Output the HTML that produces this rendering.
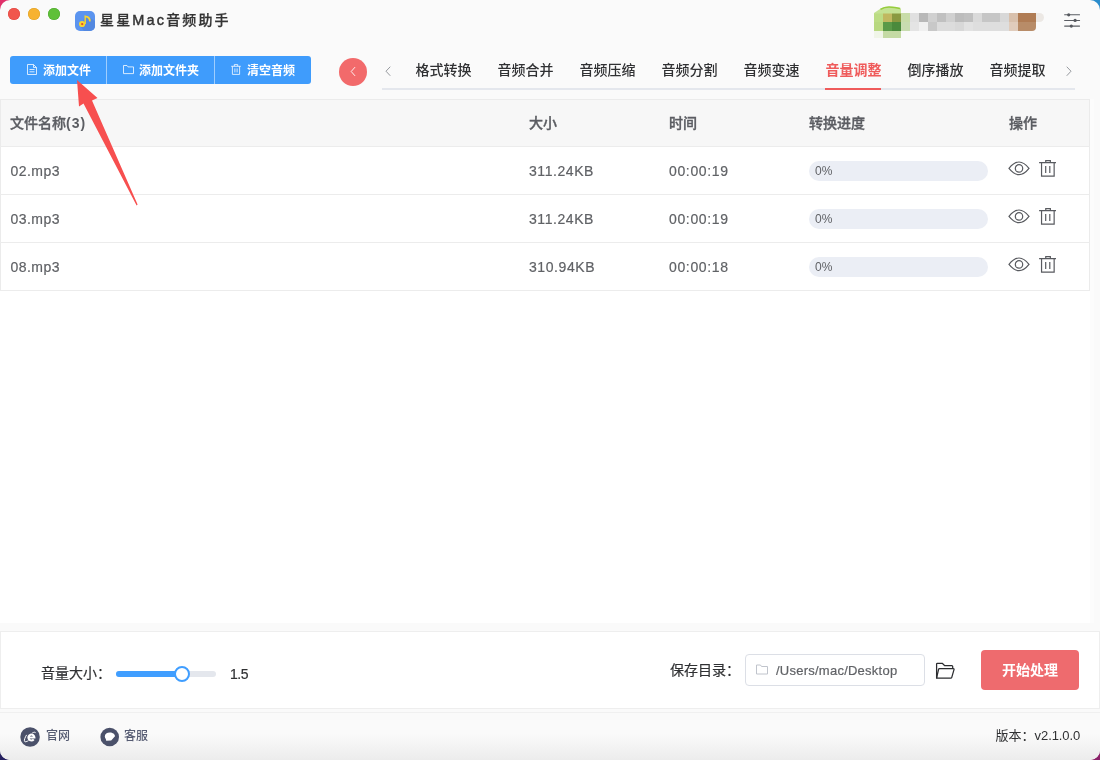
<!DOCTYPE html>
<html lang="zh-CN">
<head>
<meta charset="utf-8">
<title>星星Mac音频助手</title>
<style>
*{box-sizing:border-box;margin:0;padding:0}
html,body{width:1100px;height:760px;overflow:hidden}
body{position:relative;background:#fafafa;font-family:"Liberation Sans","Noto Sans CJK SC",sans-serif;color:#606266;font-size:14px}
.abs{position:absolute}
.corner{position:absolute;width:14px;height:14px}
#win{will-change:transform;position:absolute;left:0;top:0;width:1100px;height:760px;border-radius:10px;background:#fafafa;overflow:hidden}
.tl{position:absolute;width:12px;height:12px;border-radius:50%;top:8px}
#title{position:absolute;left:100px;top:8px;height:24px;line-height:24px;font-size:14px;letter-spacing:2.15px;color:#333;font-weight:500;-webkit-text-stroke:.25px #333;white-space:nowrap}
.btns{position:absolute;left:10px;top:56px;width:301px;height:28px;border-radius:3px;background:#3f9cfc;overflow:hidden}
.btn{position:absolute;top:0;height:28px;color:#fff;font-size:12px;font-weight:700;line-height:28px;white-space:nowrap}
.btn svg{position:absolute}
.btn span{position:absolute;top:1px}
.sep{position:absolute;top:0;width:1px;height:28px;background:rgba(255,255,255,.5)}
.tab{position:absolute;top:58px;height:24px;line-height:24px;font-size:14px;font-weight:500;color:#303133;white-space:nowrap;width:56px;margin-left:-.5px}
.tab.on{color:#ef5b5b;font-weight:700}
.th{position:absolute;top:111px;height:24px;line-height:24px;font-size:14px;font-weight:500;-webkit-text-stroke:.35px #5b5d62;color:#5b5d62;white-space:nowrap}
.td{position:absolute;height:24px;line-height:24px;font-size:14px;color:#606266;white-space:nowrap;-webkit-text-stroke:.2px currentColor}
.hl{position:absolute;left:0;width:1090px;height:1px;background:#ececec}
.pg{position:absolute;left:809px;width:179px;height:20px;border-radius:10px;background:#ebeef5;font-size:12px;line-height:20px;color:#606266;padding-left:6px}
.ico{position:absolute}
.eye,.trash{fill:none;stroke:#585a5f;stroke-width:1.2}
.sz{letter-spacing:.57px}
.fn{letter-spacing:.45px;margin-left:.5px}
.tm{letter-spacing:.65px}
#mosaic i{position:absolute;display:block}
</style>
</head>
<body>
<div class="corner" style="left:0;top:0;background:#e0306a"></div>
<div class="corner" style="right:0;top:0;background:#2a8ccc"></div>
<div class="corner" style="left:0;bottom:0;background:#26215f"></div>
<div class="corner" style="right:0;bottom:0;background:#8a2068"></div>
<div id="win">
  <!-- footer gradient -->
  <div class="abs" style="left:0;top:712px;width:1100px;height:48px;background:linear-gradient(#fafafa 0%,#fafafa 45%,#ececec 100%)"></div>

  <!-- traffic lights -->
  <div class="tl" style="left:8px;background:#f1564d;box-shadow:inset 0 0 0 .5px #e0443e"></div>
  <div class="tl" style="left:28px;background:#f7b230;box-shadow:inset 0 0 0 .5px #dea123"></div>
  <div class="tl" style="left:48px;background:#5fc038;box-shadow:inset 0 0 0 .5px #4aa72b"></div>

  <!-- app icon -->
  <svg class="ico" style="left:75px;top:11px" width="20" height="20" viewBox="0 0 20 20">
    <defs><clipPath id="ic"><rect width="20" height="20" rx="5"/></clipPath></defs>
    <g clip-path="url(#ic)">
      <rect width="20" height="20" fill="#5b94ef"/>
      <path d="M11 4.3L20 10V20H9L5 15Z" fill="#5388e0"/>
      <circle cx="7.1" cy="13" r="3.1" fill="#f8d52e"/>
      <path d="M9.5 13V4.2C12.3 4.6 14.5 5.6 15.3 7.4C15.9 8.8 15.8 10.2 15.2 10.7C14.6 10.9 13.8 10.2 13.8 9C13.8 7.6 12.6 6.7 10.9 6.4V13Z" fill="#f8d52e"/>
      <circle cx="7.2" cy="13.1" r="1.15" fill="#e4472f"/>
    </g>
  </svg>
  <div id="title">星星<span style="font-size:14.5px;-webkit-text-stroke:.45px #333">Mac</span>音频助手</div>

  <!-- mosaic -->
  <div id="mosaic"><i style="left:874px;top:13px;width:9px;height:9px;background:#bcdc84"></i><i style="left:883px;top:13px;width:9px;height:9px;background:#c0b860"></i><i style="left:892px;top:13px;width:9px;height:9px;background:#8a9a40"></i><i style="left:901px;top:13px;width:9px;height:9px;background:#c8dca8"></i><i style="left:910px;top:13px;width:9px;height:9px;background:#e0e0e0"></i><i style="left:919px;top:13px;width:9px;height:9px;background:#b8b8b8"></i><i style="left:928px;top:13px;width:9px;height:9px;background:#d0d0d0"></i><i style="left:937px;top:13px;width:9px;height:9px;background:#c0c0c0"></i><i style="left:946px;top:13px;width:9px;height:9px;background:#d0d0d0"></i><i style="left:955px;top:13px;width:9px;height:9px;background:#bcbcbc"></i><i style="left:964px;top:13px;width:9px;height:9px;background:#c0c0c0"></i><i style="left:973px;top:13px;width:9px;height:9px;background:#dadada"></i><i style="left:982px;top:13px;width:9px;height:9px;background:#c6c6c6"></i><i style="left:991px;top:13px;width:9px;height:9px;background:#c6c6c6"></i><i style="left:1000px;top:13px;width:9px;height:9px;background:#d8d8d8"></i><i style="left:1009px;top:13px;width:9px;height:9px;background:#d8c0ac"></i><i style="left:1018px;top:13px;width:9px;height:9px;background:#b07c54"></i><i style="left:1027px;top:13px;width:9px;height:9px;background:#b07c54"></i><i style="left:1036px;top:13px;width:8px;height:9px;background:#ece8e4;border-radius:0 5px 5px 0"></i><i style="left:874px;top:22px;width:9px;height:9px;background:#b8d880"></i><i style="left:883px;top:22px;width:9px;height:9px;background:#5a9a48"></i><i style="left:892px;top:22px;width:9px;height:9px;background:#4a8a3c"></i><i style="left:901px;top:22px;width:9px;height:9px;background:#c8dcb0"></i><i style="left:910px;top:22px;width:9px;height:9px;background:#e4e4e4"></i><i style="left:919px;top:22px;width:9px;height:9px;background:#f0f0f0"></i><i style="left:928px;top:22px;width:9px;height:9px;background:#c8c8c8"></i><i style="left:937px;top:22px;width:9px;height:9px;background:#dcdcdc"></i><i style="left:946px;top:22px;width:9px;height:9px;background:#dcdcdc"></i><i style="left:955px;top:22px;width:9px;height:9px;background:#d8d8d8"></i><i style="left:964px;top:22px;width:9px;height:9px;background:#e2e2e2"></i><i style="left:973px;top:22px;width:9px;height:9px;background:#dedede"></i><i style="left:982px;top:22px;width:9px;height:9px;background:#dedede"></i><i style="left:991px;top:22px;width:9px;height:9px;background:#dedede"></i><i style="left:1000px;top:22px;width:9px;height:9px;background:#dedede"></i><i style="left:1009px;top:22px;width:9px;height:9px;background:#e0ccbc"></i><i style="left:1018px;top:22px;width:9px;height:9px;background:#b88c68"></i><i style="left:1027px;top:22px;width:9px;height:9px;background:#b88c68;border-radius:0 0 4px 0"></i><i style="left:883px;top:31px;width:18px;height:7px;background:#c4daa4"></i><i style="left:874px;top:31px;width:9px;height:7px;background:#f0f5e8"></i><svg class="ico" style="left:874px;top:6px" width="27" height="8" viewBox="0 0 27 8"><path d="M0 7.5V7L6 3C9 1 12 .8 15 .8C20 .8 24 1.4 27 2.6V7.5Z" fill="#c4e294"/><path d="M6.5 3.4C9.5 1.4 12 1 15 1C19 1 23 1.6 26 2.6" fill="none" stroke="#96cc3c" stroke-width="1.6"/></svg></div>

  <!-- settings icon -->
  <svg class="ico" style="left:1060px;top:8px" width="24" height="24" viewBox="0 0 24 24" fill="none" stroke="#5a5d63" stroke-width="1.05" stroke-linecap="round">
    <path d="M4.6 6.8H19.6M4.6 12.4H19.6M4.6 18.1H19.6"/>
    <circle cx="8.7" cy="6.8" r="1.6" fill="#55585e" stroke="none"/>
    <circle cx="15.1" cy="12.4" r="1.6" fill="#55585e" stroke="none"/>
    <circle cx="11.3" cy="18.1" r="1.6" fill="#55585e" stroke="none"/>
  </svg>

  <!-- toolbar buttons -->
  <div class="btns">
    <div class="btn" style="left:0;width:96px">
      <svg style="left:17px;top:8px" width="10" height="11" viewBox="0 0 10 11" fill="none" stroke="#fff" stroke-width=".85" opacity=".92"><path d="M.5.5H6.5L9.5 3.5V10.5H.5Z"/><path d="M6.5.5V3.5H9.5M2.5 5.5H7.5M2.5 7.8H7.5"/></svg>
      <span style="left:33px">添加文件</span>
    </div>
    <div class="sep" style="left:96px"></div>
    <div class="btn" style="left:97px;width:107px">
      <svg style="left:16px;top:9px" width="11" height="10" viewBox="0 0 11 10" fill="none" stroke="#fff" stroke-width=".85" opacity=".92"><path d="M.5.5H4L5 1.9H10.5V8.6H.5Z"/></svg>
      <span style="left:32px">添加文件夹</span>
    </div>
    <div class="sep" style="left:204px"></div>
    <div class="btn" style="left:205px;width:96px">
      <svg style="left:16px;top:8px" width="10" height="12" viewBox="0 0 10 12" fill="none" stroke="#fff" stroke-width=".85" opacity=".92"><path d="M.2 2.3H9.8M3.3 2.3V.6H6.7V2.3M1.4 2.3V10.4H8.6V2.3M3.9 4.4V8.4M6.1 4.4V8.4"/></svg>
      <span style="left:32px">清空音频</span>
    </div>
  </div>

  <!-- red circle -->
  <div class="abs" style="left:339px;top:58px;width:28px;height:28px;border-radius:50%;background:#f26a6b"></div>
  <svg class="ico" style="left:346px;top:65px" width="14" height="14" viewBox="0 0 14 14" fill="none" stroke="#fff" stroke-width=".95" stroke-linecap="round" stroke-linejoin="round" opacity=".92"><path d="M8.8 2.4L5.2 6.5L8.8 10.6"/></svg>

  <!-- tabs -->
  <div class="abs" style="left:382px;top:88px;width:693px;height:2px;background:#e4e7ed"></div>
  <svg class="ico" style="left:382px;top:64px" width="12" height="14" viewBox="0 0 12 14" fill="none" stroke="#909399" stroke-width=".95" stroke-linecap="round" stroke-linejoin="round"><path d="M8 3L4 7.2L8 11.5"/></svg>
  <div class="tab" style="left:416px">格式转换</div>
  <div class="tab" style="left:498px">音频合并</div>
  <div class="tab" style="left:580px">音频压缩</div>
  <div class="tab" style="left:662px">音频分割</div>
  <div class="tab" style="left:744px">音频变速</div>
  <div class="tab on" style="left:826px">音量调整</div>
  <div class="tab" style="left:908px">倒序播放</div>
  <div class="tab" style="left:990px">音频提取</div>
  <div class="abs" style="left:825px;top:88px;width:56px;height:2px;background:#ef5b5b"></div>
  <svg class="ico" style="left:1063.4px;top:64px" width="12" height="14" viewBox="0 0 12 14" fill="none" stroke="#909399" stroke-width=".95" stroke-linecap="round" stroke-linejoin="round"><path d="M4 3L8 7.2L4 11.5"/></svg>

  <!-- table area -->
  <div class="abs" style="left:0;top:99px;width:1094px;height:524px;background:#fcfcfc"></div>
  <div class="abs" style="left:0;top:99px;width:1090px;height:524px;background:#fff"></div>
  <div class="abs" style="left:0;top:99px;width:1090px;height:48px;background:#f7f7f7;border-top:1px solid #ebebeb"></div>
  <div class="abs" style="left:1089px;top:99px;width:1px;height:192px;background:#ebebeb"></div>
  <div class="abs" style="left:0;top:99px;width:1px;height:192px;background:#ebebeb"></div>
  <div class="hl" style="top:146px"></div>
  <div class="hl" style="top:194px"></div>
  <div class="hl" style="top:242px"></div>
  <div class="hl" style="top:290px"></div>

  <div class="th" style="left:10px">文件名称<span style="letter-spacing:1px;font-weight:700;-webkit-text-stroke:0">(3)</span></div>
  <div class="th" style="left:529px">大小</div>
  <div class="th" style="left:669px">时间</div>
  <div class="th" style="left:809px">转换进度</div>
  <div class="th" style="left:1009px">操作</div>

  <div id="rows">
  <div class="td fn" style="left:10px;top:159px">02.mp3</div>
  <div class="td sz" style="left:529px;top:159px">311.24KB</div>
  <div class="td tm" style="left:669px;top:159px">00:00:19</div>
  <div class="pg" style="top:161px">0%</div>
  <svg class="ico eye" style="left:1007px;top:159px" width="24" height="20" viewBox="0 0 24 20"><path d="M2 9.3C5.6 4.7 8.8 3 12 3S18.4 4.7 22 9.3C18.4 13.9 15.2 15.6 12 15.6S5.6 13.9 2 9.3Z"/><circle cx="12" cy="9.4" r="3.7"/></svg>
  <svg class="ico trash" style="left:1037px;top:158px" width="22" height="22" viewBox="0 0 22 22"><path d="M2.1 4.7H19M8.75 4.7V2.7H13.35V4.7M4.55 4.7V18.15H17.15V4.7M8.7 7.9V14.9M12.8 7.9V14.9"/></svg>
  <div class="td fn" style="left:10px;top:207px">03.mp3</div>
  <div class="td sz" style="left:529px;top:207px">311.24KB</div>
  <div class="td tm" style="left:669px;top:207px">00:00:19</div>
  <div class="pg" style="top:209px">0%</div>
  <svg class="ico eye" style="left:1007px;top:207px" width="24" height="20" viewBox="0 0 24 20"><path d="M2 9.3C5.6 4.7 8.8 3 12 3S18.4 4.7 22 9.3C18.4 13.9 15.2 15.6 12 15.6S5.6 13.9 2 9.3Z"/><circle cx="12" cy="9.4" r="3.7"/></svg>
  <svg class="ico trash" style="left:1037px;top:206px" width="22" height="22" viewBox="0 0 22 22"><path d="M2.1 4.7H19M8.75 4.7V2.7H13.35V4.7M4.55 4.7V18.15H17.15V4.7M8.7 7.9V14.9M12.8 7.9V14.9"/></svg>
  <div class="td fn" style="left:10px;top:255px">08.mp3</div>
  <div class="td sz" style="left:529px;top:255px">310.94KB</div>
  <div class="td tm" style="left:669px;top:255px">00:00:18</div>
  <div class="pg" style="top:257px">0%</div>
  <svg class="ico eye" style="left:1007px;top:255px" width="24" height="20" viewBox="0 0 24 20"><path d="M2 9.3C5.6 4.7 8.8 3 12 3S18.4 4.7 22 9.3C18.4 13.9 15.2 15.6 12 15.6S5.6 13.9 2 9.3Z"/><circle cx="12" cy="9.4" r="3.7"/></svg>
  <svg class="ico trash" style="left:1037px;top:254px" width="22" height="22" viewBox="0 0 22 22"><path d="M2.1 4.7H19M8.75 4.7V2.7H13.35V4.7M4.55 4.7V18.15H17.15V4.7M8.7 7.9V14.9M12.8 7.9V14.9"/></svg>
  </div>

  <!-- arrow annotation -->
  <svg class="ico" style="left:60px;top:70px" width="100" height="150" viewBox="60 70 100 150"><polygon points="77,80 97.5,98 92,100.5 137.6,204.6 136.6,205.6 83.5,103.5 79,106.5" fill="#f74f4f"/></svg>

  <!-- bottom panel -->
  <div class="abs" style="left:0;top:631px;width:1100px;height:78px;background:#fff;border:1px solid #eee"></div>
  <div class="abs" style="left:0;top:712px;width:1100px;height:1px;background:#f0f0f0"></div>
  <div class="td" style="left:41px;top:661px;color:#303133">音量大小：</div>
  <div class="abs" style="left:116px;top:671px;width:100px;height:6px;border-radius:3px;background:#e4e7ed"></div>
  <div class="abs" style="left:116px;top:671px;width:66px;height:6px;border-radius:3px 0 0 3px;background:#409eff"></div>
  <div class="abs" style="left:174px;top:666px;width:16px;height:16px;border-radius:50%;background:#fff;border:2px solid #409eff"></div>
  <div class="td" style="left:230px;top:662px;color:#303133;letter-spacing:-.5px">1.5</div>

  <div class="td" style="left:670px;top:658px;color:#303133">保存目录：</div>
  <div class="abs" style="left:745px;top:654px;width:180px;height:32px;border:1px solid #dcdfe6;border-radius:4px;background:#fff"></div>
  <svg class="ico" style="left:756px;top:664px" width="12" height="11" viewBox="0 0 12 11" fill="none" stroke="#c0c4cc" stroke-width="1"><path d="M.5 1H4.5L5.5 2.5H11.5V10H.5Z"/></svg>
  <div class="td" style="left:776px;top:659px;font-size:13px;letter-spacing:.24px">/Users/mac/Desktop</div>
  <svg class="ico" style="left:934px;top:661px" width="22" height="19" viewBox="0 0 22 19" fill="none" stroke="#2b2c2f" stroke-width="1.25" stroke-linejoin="round"><path d="M2.6 17.2V3.1Q2.6 2.3 3.4 2.3H8.2L10.8 4.7H17.8Q18.7 4.7 18.7 5.6V7.7"/><path d="M2.6 17.2L4.5 8.5Q4.7 7.7 5.5 7.7H19.3Q20.3 7.7 20 8.6L17.7 16.6Q17.5 17.2 16.8 17.2Z"/></svg>
  <div class="abs" style="left:981px;top:650px;width:98px;height:40px;border-radius:4px;background:#ee6b6e;color:#fff;font-weight:700;font-size:14px;line-height:40px;text-align:center">开始处理</div>

  <!-- footer -->
  <svg class="ico" style="left:20px;top:726.5px" width="20" height="20" viewBox="0 0 20 20"><circle cx="10.05" cy="10" r="9.75" fill="#4b516a"/><path d="M13.75 12.4A3 3 0 1 1 14.4 10.5H8.4" fill="none" stroke="#fff" stroke-width="2.1"/><path d="M6.4 8.2C5 10.4 3.9 13.3 4.6 14.4C5.2 15.2 6.8 14.6 8.2 13.8M12.6 5.8C13.8 5.1 15 4.9 15.4 5.4" fill="none" stroke="#fff" stroke-width="1" stroke-linecap="round"/></svg>
  <div class="abs" style="left:46px;top:724px;height:24px;line-height:24px;font-size:12px;font-weight:500;color:#555b72">官网</div>
  <svg class="ico" style="left:99.5px;top:726.5px" width="20" height="20" viewBox="0 0 20 20"><circle cx="9.7" cy="10" r="9.3" fill="#4b516a"/><path d="M4.8 9.5C4.8 7 7 5.5 9.8 5.5C12.8 5.5 15 7.2 15 9.3L11.2 13.6L6.2 13.8L5.8 12C5.2 11.3 4.8 10.5 4.8 9.5Z" fill="#fff"/></svg>
  <div class="abs" style="left:124px;top:724px;height:24px;line-height:24px;font-size:12px;font-weight:500;color:#555b72">客服</div>
  <div class="abs" style="left:995.6px;top:724px;height:24px;line-height:24px;font-size:13px;color:#303133;white-space:nowrap">版本：<span style="letter-spacing:-.1px">v2.1.0.0</span></div>
</div>
</body>
</html>
